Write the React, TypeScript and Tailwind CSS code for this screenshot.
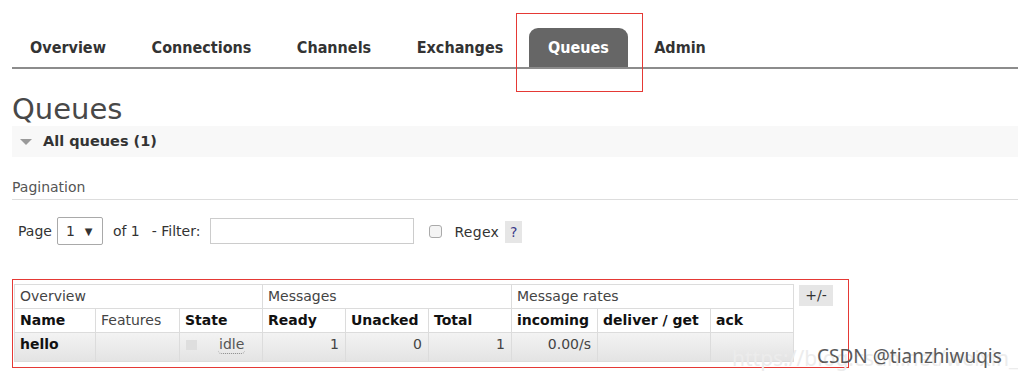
import React from "react";

const tabs = [
  { name: "Overview", w: "w-[116px]" },
  { name: "Connections", w: "w-[139px]" },
  { name: "Channels", w: "w-[114px]" },
  { name: "Exchanges", w: "w-[126px]" },
  { name: "Queues", w: "w-[99px]" },
  { name: "Admin", w: "w-[92px]" },
];

const cell = "border border-[#dcdcdc] px-[5px] text-left";
const dcell = "border border-[#dcdcdc] px-[5px] pb-[5px] text-left";

export default function App() {
  return (
    <div className="relative w-[1018px] h-[378px] overflow-hidden bg-white font-['DejaVu_Sans',sans-serif] text-[#444]">
      {/* tab bar */}
      <div className="pl-[12px] pt-[28px]">
        <div className="border-b-2 border-[#8c8c8c]">
          <div className="flex gap-[6px] -ml-[2px] font-['DejaVu_Sans_Condensed','DejaVu_Sans',sans-serif] text-[16px] font-bold">
            {tabs.map((t) => (
              <div
                key={t.name}
                className={
                  t.name === "Queues"
                    ? t.w + " h-[39px] flex items-center justify-center rounded-t-[9px] bg-[#666] text-white"
                    : t.w + " h-[39px] flex items-center justify-center text-[#333]"
                }
              >
                {t.name}
              </div>
            ))}
          </div>
        </div>

        <h1 className="pt-[23px] text-[29px] leading-[34px] text-[#484848]">Queues</h1>

        <div className="h-[31px] flex items-center bg-[#f8f8f8]">
          <svg width="12" height="8" viewBox="0 0 12 8" className="ml-[8px]">
            <polygon points="0,1 12,1 6,7" fill="#9a9a9a" />
          </svg>
          <span className="ml-[11px] text-[14.5px] font-bold text-[#333]">All queues (1)</span>
        </div>

        <div className="pt-[20px] pb-[2px] border-b border-[#ddd] text-[14px] leading-[20px] text-[#555]">Pagination</div>

        <div className="mt-[17px] h-[28px] pl-[6px] flex items-center text-[14px] text-[#333]">
          <span>Page</span>
          <div className="ml-[5px] w-[46px] h-[28px] border border-[#a9a9a9] rounded-[2px] flex items-center pl-[8px]">
            <span>1</span>
            <span className="ml-[10px] text-[10px]">▼</span>
          </div>
          <span className="ml-[10px]">of 1</span>
          <span className="ml-[12px]">- Filter:</span>
          <div className="ml-[10px] w-[204px] h-[26px] border border-[#ccc]" />
          <div className="ml-[15px] w-[13px] h-[13px] border border-[#aaa] rounded-[3px] bg-[#f4f4f4]" />
          <span className="ml-[12px] mt-[2px] tracking-[0.3px]">Regex</span>
          <span className="ml-[6px] mt-[2px] w-[17px] h-[22px] bg-[#e6e6e6] flex items-center justify-center text-[#3a3a8a]">?</span>
        </div>

        <div className="mt-[39px] ml-[2px] flex items-start">
          <table className="table-fixed border-collapse w-[779px] text-[14px]">
            <colgroup>
              <col className="w-[81px]" />
              <col className="w-[84px]" />
              <col className="w-[83px]" />
              <col className="w-[83px]" />
              <col className="w-[83px]" />
              <col className="w-[83px]" />
              <col className="w-[86px]" />
              <col className="w-[113px]" />
              <col className="w-[83px]" />
            </colgroup>
            <thead>
              <tr className="h-[24px] text-[#444]">
                <th colSpan={3} className={cell + " font-normal"}>Overview</th>
                <th colSpan={3} className={cell + " font-normal"}>Messages</th>
                <th colSpan={3} className={cell + " font-normal"}>Message rates</th>
              </tr>
              <tr className="h-[24px] text-[#111]">
                <th className={cell}>Name</th>
                <th className={cell + " font-normal text-[#444]"}>Features</th>
                <th className={cell}>State</th>
                <th className={cell}>Ready</th>
                <th className={cell}>Unacked</th>
                <th className={cell}>Total</th>
                <th className={cell}>incoming</th>
                <th className={cell}>deliver / get</th>
                <th className={cell}>ack</th>
              </tr>
            </thead>
            <tbody>
              <tr className="h-[29px] bg-gradient-to-b from-[#f3f3f3] to-[#e3e3e3]">
                <td className={dcell + " font-bold text-[#111]"}>hello</td>
                <td className={dcell}></td>
                <td className={dcell}>
                  <div className="flex items-center">
                    <span className="w-[11px] h-[10px] bg-[#dedede] ml-[1px]" />
                    <span className="ml-[21px] px-[1px] rounded-b-[4px] border-b border-dotted border-[#888] leading-[17px] text-[#555]">idle</span>
                  </div>
                </td>
                <td className={dcell + " text-right pr-[6px]"}>1</td>
                <td className={dcell + " text-right pr-[6px]"}>0</td>
                <td className={dcell + " text-right pr-[6px]"}>1</td>
                <td className={dcell + " text-right pr-[6px]"}>0.00/s</td>
                <td className={dcell}></td>
                <td className={dcell}></td>
              </tr>
            </tbody>
          </table>
          <div className="ml-[5px] mt-[1px] w-[34px] h-[21px] bg-[#e6e6e6] flex items-center justify-center text-[14px] text-[#333]">+/-</div>
        </div>
      </div>

      {/* screenshot annotations */}
      <div className="absolute left-[516px] top-[13px] w-[127px] h-[79px] border border-[#e53935]" />
      <div className="absolute left-[12px] top-[279px] w-[837px] h-[89px] border border-[#e53935]" />
      <div className="absolute left-[732px] top-[345px] text-[21px] leading-[26px] text-[#ececec] font-['Noto_Sans',sans-serif] whitespace-nowrap">
        https://blog.csdn.net/weixin_4158
      </div>
      <div className="absolute left-[817px] top-[343px] text-[19px] leading-[26px] text-[#5a5a5a] font-['Noto_Sans',sans-serif] whitespace-nowrap">
        CSDN @tianzhiwuqis
      </div>
    </div>
  );
}
